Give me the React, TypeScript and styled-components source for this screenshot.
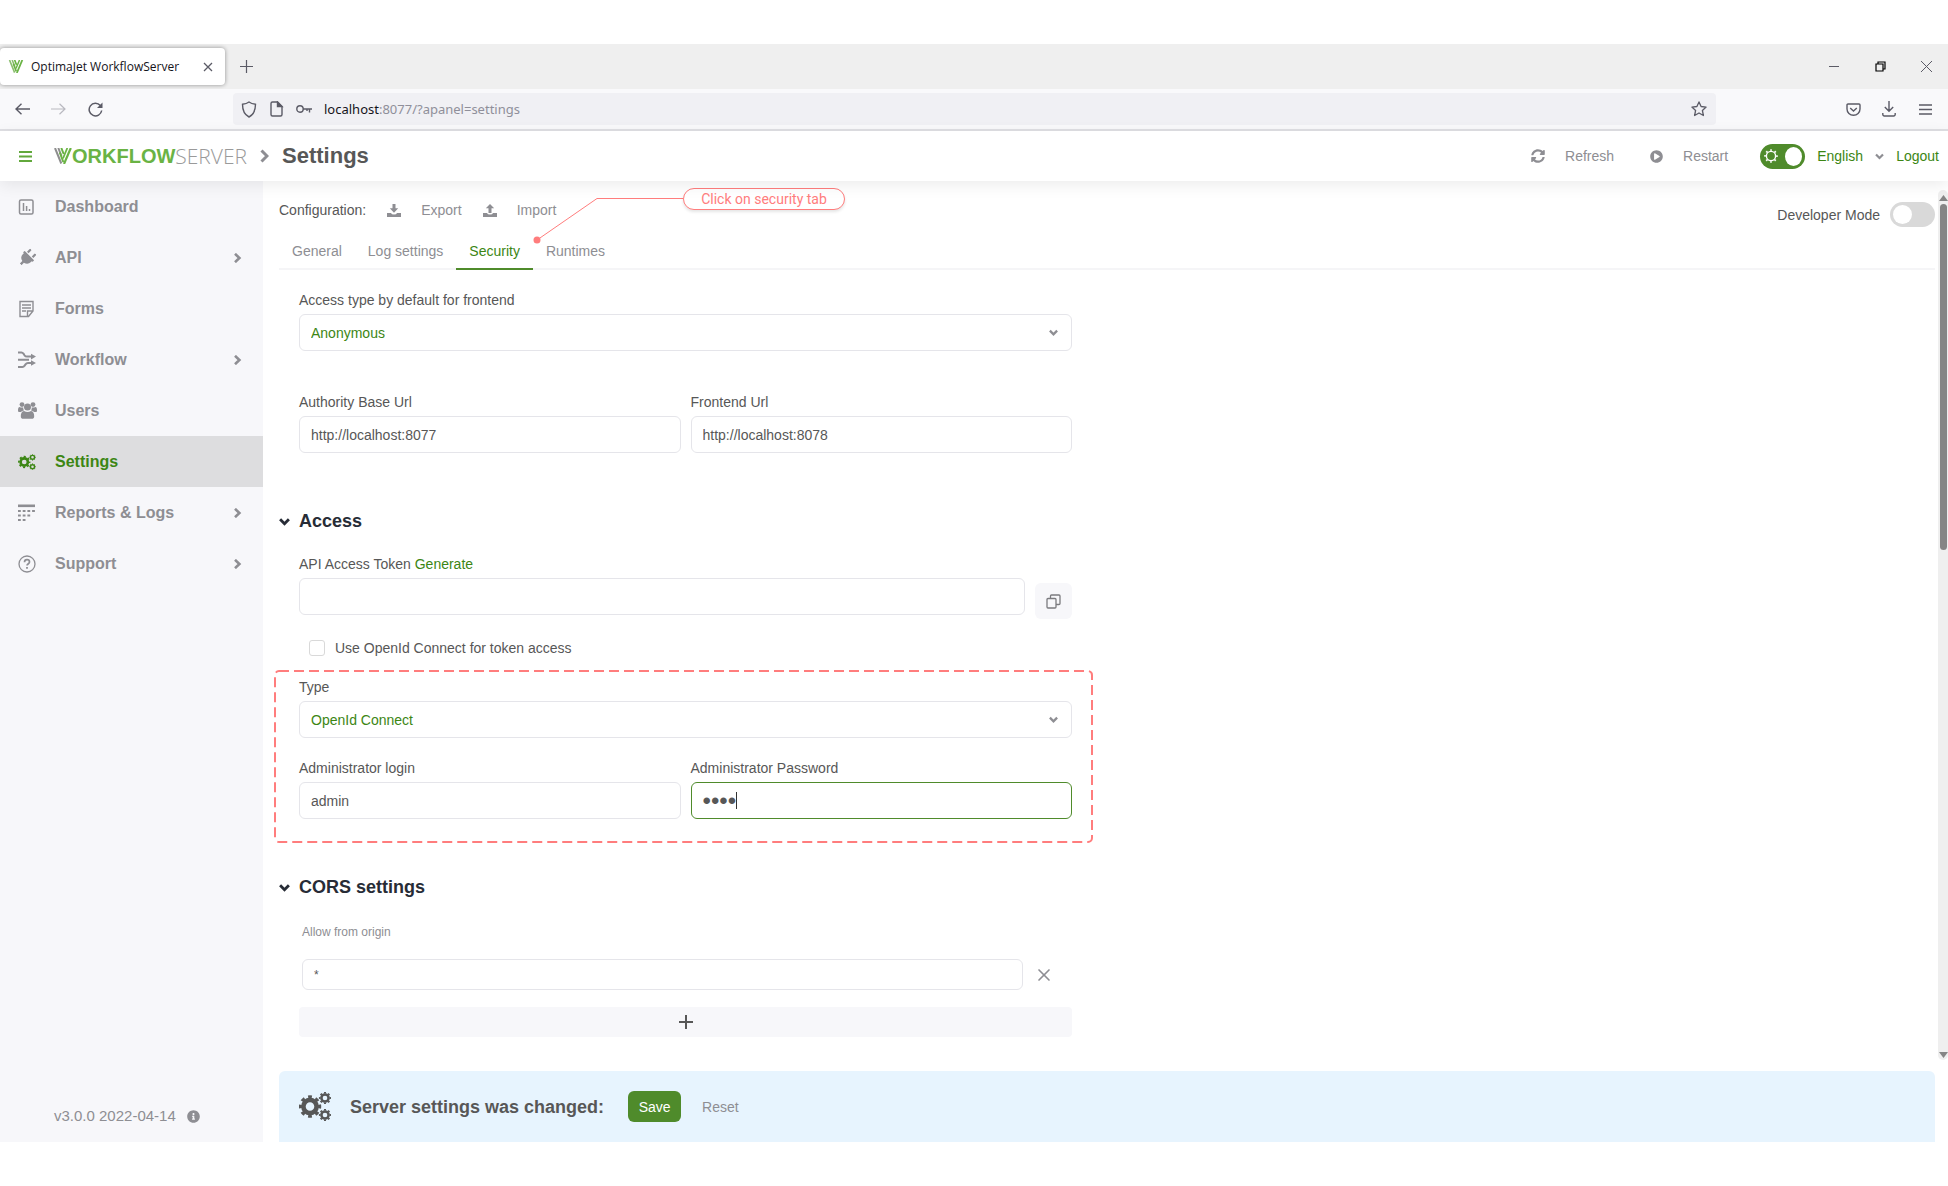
import React, { useState } from "react";
import styled, { createGlobalStyle } from "styled-components";
import { FaPlug, FaInfoCircle, FaPlayCircle, FaSyncAlt } from "react-icons/fa";
import { FiX } from "react-icons/fi";

const green = "#4f8b2b";
const linkGreen = "#3c8614";
const grey = "#8e8e93";
const text = "#575757";
const line = "#e5e5ea";
const pale = "#f7f7fa";
const coral = "#ff7d7d";

const GlobalStyle = createGlobalStyle`
  *, *::before, *::after { box-sizing: border-box; }
  body { margin: 0; background: #fff; color: ${text}; font: 14px/20px "Liberation Sans", Arial, sans-serif; }
  button, input, select { font: inherit; color: inherit; }
  button { background: none; border: 0; padding: 0; display: inline-flex; align-items: center; justify-content: center; }
  a { text-decoration: none; }
  svg { display: block; flex: none; }
`;

const Page = styled.div`
  min-height: 100vh;
  padding: 44px 0;
  display: flex;
  flex-direction: column;
`;

/* browser chrome */
const TabStrip = styled.div`
  display: flex;
  align-items: center;
  justify-content: space-between;
  height: 45px;
  background: #efefef;
`;
const Row = styled.div<{ $gap?: number }>`
  display: flex;
  align-items: center;
  gap: ${(p) => p.$gap ?? 0}px;
`;
const BrowserTab = styled.div`
  display: flex;
  align-items: center;
  width: 225px;
  height: 37px;
  padding: 0 10px 0 8px;
  gap: 7px;
  background: #fff;
  border-radius: 4px;
  box-shadow: 0 0 4px rgba(0, 0, 0, 0.4);
  font: 12px/20px "Open Sans", sans-serif;
  color: #15141a;
`;
const TabTitle = styled.span`
  flex: 1;
  white-space: nowrap;
`;
const ChromeButton = styled.button<{ $w?: number; $c?: string }>`
  width: ${(p) => p.$w ?? 36}px;
  height: 32px;
  color: ${(p) => p.$c ?? "#5b5b66"};
`;
const NavBar = styled.div`
  display: flex;
  align-items: center;
  height: 42px;
  padding: 0 5px 0 4px;
  background: #f9f9fb;
  border-bottom: 2px solid #dfdfe3;
`;
const NavButtons = styled(Row)`
  width: 229px;
`;
const UrlBar = styled.div`
  display: flex;
  align-items: center;
  flex: 1;
  height: 32px;
  padding: 0 6px 0 8px;
  gap: 12px;
  margin-right: 119px;
  background: #f0f0f4;
  border-radius: 4px;
  color: #5b5b66;
`;
const Url = styled.span`
  flex: 1;
  font: 13px/20px "Noto Sans", sans-serif;
  color: #8f8f9a;
  b { font-weight: 400; color: #15141a; }
`;

/* application header */
const Header = styled.header`
  position: relative;
  z-index: 1;
  display: flex;
  align-items: center;
  justify-content: space-between;
  height: 50px;
  padding: 0 9px 0 19px;
  background: #fff;
  box-shadow: 0 4px 16px rgba(0, 0, 0, 0.08);
`;
const MenuButton = styled.button`
  color: #62a83c;
  margin-right: 22px;
`;
const Logo = styled.a`
  display: flex;
  align-items: center;
  font: 700 20px/24px "Liberation Sans", Arial, sans-serif;
  color: #6ab344;
`;
const LogoLight = styled.span`
  font: 300 21px/24px "Open Sans", sans-serif;
  color: #9a9a9a;
`;
const Title = styled.h1`
  margin: 0;
  font-size: 22px;
  line-height: 28px;
`;
const TextButton = styled.button<{ $gap?: number }>`
  gap: ${(p) => p.$gap ?? 20}px;
  color: ${grey};
`;
const HeaderActions = styled(Row)`
  gap: 12px;
`;
const ActionGroup = styled(Row)`
  gap: 36px;
  margin-right: 20px;
`;
const Toggle = styled.label<{ $on?: boolean }>`
  position: relative;
  display: flex;
  align-items: center;
  justify-content: ${(p) => (p.$on ? "flex-end" : "flex-start")};
  width: 45px;
  height: 25px;
  padding: 0 3px;
  border-radius: 13px;
  background: ${(p) => (p.$on ? green : "#d9d9d9")};
  color: #fff;
  input { position: absolute; inset: 0; opacity: 0; margin: 0; width: 100%; height: 100%; }
`;
const Knob = styled.span`
  width: 19px;
  height: 19px;
  border-radius: 50%;
  background: #fff;
`;
const LangSelect = styled.select`
  appearance: none;
  width: 50px;
  padding: 0;
  border: 0;
  background: none;
  color: ${linkGreen};
`;
const LogoutLink = styled.a`
  color: ${linkGreen};
`;

/* sidebar */
const Body = styled.div`
  flex: 1;
  display: grid;
  grid-template-columns: 263px minmax(0, 1fr) 13px;
`;
const Sidebar = styled.nav`
  display: flex;
  flex-direction: column;
  justify-content: space-between;
  background: ${pale};
`;
const Menu = styled.ul`
  margin: 0;
  padding: 0;
  list-style: none;
`;
const MenuItem = styled.a<{ $active?: boolean }>`
  display: grid;
  grid-template-columns: 18px 1fr 8px;
  align-items: center;
  column-gap: 19px;
  height: 51px;
  padding: 0 22px 0 18px;
  font-size: 16px;
  font-weight: 700;
  color: ${(p) => (p.$active ? linkGreen : grey)};
  background: ${(p) => (p.$active ? "#dddddf" : "transparent")};
`;
const Version = styled.div`
  display: flex;
  align-items: center;
  gap: 11px;
  padding: 0 54px 16px;
  font-size: 15px;
  white-space: nowrap;
  color: ${grey};
`;

/* settings page */
const Main = styled.main`
  display: flex;
  flex-direction: column;
  justify-content: space-between;
  padding-left: 16px;
`;
const TopRow = styled.div`
  display: flex;
  justify-content: space-between;
  align-items: flex-start;
  height: 50px;
  padding-top: 19px;
`;
const Config = styled(Row)`
  gap: 21px;
`;
const DevMode = styled(Row)`
  gap: 10px;
  padding-top: 2px;
`;
const Tabs = styled.div`
  position: relative;
  display: flex;
  height: 39px;
  border-bottom: 2px solid #f5f5f7;
`;
const Tab = styled.button<{ $active?: boolean }>`
  height: 39px;
  padding: 3px 13px 0;
  margin-bottom: -2px;
  color: ${(p) => (p.$active ? linkGreen : grey)};
  border-bottom: 2px solid ${(p) => (p.$active ? green : "transparent")};
`;
const Callout = styled.div`
  position: absolute;
  left: 254px;
  top: -43px;
  display: flex;
  align-items: flex-start;
  color: ${coral};
`;
const Pill = styled.span`
  width: 162px;
  height: 22px;
  border: 1px solid ${coral};
  border-radius: 11px;
  font: 14px/20px Roboto, sans-serif;
  text-align: center;
  background: #fff;
  box-shadow: 0 2px 3px rgba(0, 0, 0, 0.1);
`;
const Form = styled.form`
  width: 100%;
  max-width: 793px;
  padding: 20px 0 0 20px;
`;
const Columns = styled.div`
  display: grid;
  grid-template-columns: 1fr 1fr;
  column-gap: 10px;
`;
const FieldBox = styled.div<{ $after?: number }>`
  display: flex;
  flex-direction: column;
  gap: 4px;
  margin-bottom: ${(p) => p.$after ?? 0}px;
`;
const Input = styled.input<{ $short?: boolean }>`
  width: 100%;
  height: ${(p) => (p.$short ? 31 : 37)}px;
  padding: 0 11px;
  border: 1px solid ${line};
  border-radius: 6px;
  background: #fff;
  color: ${text};
  font-size: ${(p) => (p.$short ? 12 : 14)}px;
  outline: none;
`;
const PasswordInput = styled(Input)`
  border-color: ${green};
  font-size: 24px;
  caret-color: transparent;
`;
const Overlay = styled.div`
  display: grid;
  align-items: center;
  > * { grid-area: 1 / 1; }
`;
const Caret = styled.span`
  width: 1px;
  height: 17px;
  margin-left: 45px;
  background: #333;
`;
const SelectWrap = styled(Overlay)`
  > svg { justify-self: end; margin-right: 14px; color: ${grey}; pointer-events: none; }
`;
const Select = styled.select`
  appearance: none;
  width: 100%;
  height: 37px;
  padding: 0 11px;
  border: 1px solid ${line};
  border-radius: 6px;
  background: #fff;
  color: ${linkGreen};
`;
const SectionTitle = styled.h2<{ $after: number }>`
  display: flex;
  align-items: center;
  gap: 9px;
  margin: 0 0 ${(p) => p.$after}px -20px;
  font-size: 18px;
  line-height: 24px;
  color: #272c36;
`;
const TokenRow = styled.div`
  display: grid;
  grid-template-columns: 1fr 37px;
  column-gap: 10px;
`;
const CopyButton = styled.button`
  height: 36px;
  margin-top: 5px;
  border-radius: 6px;
  background: ${pale};
  color: #7b7b7f;
`;
const Generate = styled.a`
  color: ${linkGreen};
`;
const CheckRow = styled.label`
  display: flex;
  align-items: center;
  gap: 10px;
  margin: 19px 0 13px 10px;
`;
const Checkbox = styled.input`
  appearance: none;
  width: 16px;
  height: 16px;
  margin: 0;
  border: 1px solid #d9d9d9;
  border-radius: 3px;
`;
const Highlight = styled.div`
  position: relative;
  margin: 0 -20px 33px -24px;
  padding: 6px 20px 23px 24px;
  > svg { position: absolute; inset: 0; width: 100%; height: 100%; overflow: visible; pointer-events: none; }
`;
const SmallLabel = styled.label`
  display: block;
  margin: 0 0 17px 3px;
  font-size: 12px;
  color: ${grey};
`;
const OriginRow = styled.div`
  display: grid;
  grid-template-columns: 1fr 42px;
  margin: 0 7px 17px 3px;
  color: ${grey};
`;
const AddButton = styled.button`
  width: 100%;
  height: 30px;
  border-radius: 4px;
  background: ${pale};
  color: ${text};
`;
const SaveBar = styled.div`
  display: flex;
  align-items: center;
  height: 71px;
  padding: 0 20px;
  border-radius: 6px 6px 0 0;
  background: #e7f4fe;
`;
const SaveText = styled.strong`
  margin: 0 24px 0 19px;
  font-size: 18px;
`;
const SaveButton = styled.button`
  width: 53px;
  height: 31px;
  margin-right: 21px;
  border-radius: 6px;
  background: ${green};
  color: #fff;
`;
const ScrollTrack = styled.div`
  align-self: stretch;
  display: flex;
  flex-direction: column;
  align-items: center;
  margin: 9px 0 82px 3px;
  padding: 5px 0 2px 1px;
  border-radius: 5px;
  background: #efefef;
  color: #858585;
`;
const ScrollArea = styled.div`
  flex: 1;
  width: 7px;
  margin: 3px 0;
`;
const Thumb = styled.div`
  height: 41%;
  border-radius: 4px;
  background: #858585;
`;

const Stroke = ({ w = 16, h = w, vb, sw = 1, children }: { w?: number; h?: number; vb?: string; sw?: number; children: React.ReactNode }) => (
  <svg width={w} height={h} viewBox={vb ?? `0 0 ${w} ${h}`} fill="none" stroke="currentColor" strokeWidth={sw} aria-hidden="true">
    {children}
  </svg>
);
const Chevron = ({ dir = "right", size = 8 }: { dir?: "right" | "down"; size?: number }) => (
  <Stroke w={size} h={size} vb="0 0 10 10" sw={2.6}>
    <path d={dir === "right" ? "M2 .8L6.400 5L2 9.200" : "M1 3L5 7L9 3"} />
  </Stroke>
);
const Mark = ({ w, h, left }: { w: number; h: number; left: string }) => (
  <svg width={w} height={h} viewBox="0 0 18 16" fill="none" strokeWidth="2" aria-hidden="true">
    <path d="M1 0L7.300 15.500M4.300 0L7.500 8" stroke={left} />
    <path d="M7.300 0L9.700 6M5.800 4.500L9.300 14" stroke="#6ab344" />
    <path d="M16.800 0L10 16" stroke="#6ab344" strokeWidth="2.200" />
    <path d="M13.300 0L9 10.500" stroke="#6ab344" strokeWidth="1.800" />
  </svg>
);

const Gear = ({ x, y, r }: { x: number; y: number; r: number }) => (
  <g>
    <circle cx={x} cy={y} r={r * 0.6} strokeWidth={r * 0.42} />
    <circle cx={x} cy={y} r={r * 0.88} strokeWidth={r * 0.28} pathLength={80} strokeDasharray="5 5" strokeDashoffset="2.500" />
  </g>
);
const GearsIcon = ({ w, h }: { w: number; h: number }) => (
  <Stroke w={w} h={h} vb="0 0 32 29">
    <Gear x={11} y={14.5} r={11} />
    <Gear x={26} y={6} r={6} />
    <Gear x={26} y={23} r={6} />
  </Stroke>
);
const DashboardIcon = () => (
  <Stroke w={16} sw={1.5}>
    <rect x="1.500" y="1" width="13.500" height="14" rx="1.500" />
    <path d="M5.500 4v8M8.600 7v5M11.500 10v2" />
  </Stroke>
);
const FormIcon = () => (
  <Stroke w={17} h={18} sw={1.4}>
    <path d="M2 1.500h13v9.500l-4.500 5.500H2zM9.500 16.500v-5.500h5.500M4 5h9M4 8h9M4 11h4" />
  </Stroke>
);
const FlowIcon = () => (
  <Stroke w={18} sw={2}>
    <path d="M0 1.500h3.500q1 0 2 1.200l1 1.600q1 1.300 2.500 1.300H15M0 8.800h11M0 16h4.500q1.200 0 2-1.200l1-1.400q1-1.400 2.500-1.400H15" />
    <path d="M13 2.800l5 2.800-5 2.800zM13 9.200l5 2.800-5 2.800z" fill="currentColor" stroke="none" />
  </Stroke>
);
const UsersIcon = () => (
  <svg width="19" height="17" viewBox="0 0 19 17" fill="currentColor" aria-hidden="true">
    <circle cx="4" cy="2.600" r="2.400" />
    <circle cx="15" cy="2.600" r="2.400" />
    <circle cx="9.500" cy="5" r="3.500" />
    <path d="M5.200 5.200A5 5 0 0 0 6 8.500c-1.600.2-2.500 1-3 1.500H1.500C.5 10 0 9.500 0 8.500 0 6.500.5 5 1.500 5q2.500 1 3.700.2zM13.800 5.200a5 5 0 0 1-.8 3.300c1.600.2 2.500 1 3 1.500h1.500c1 0 1.500-.5 1.500-1.500C19 6.500 18.500 5 17.500 5q-2.500 1-3.700.2z" />
    <path d="M6 9q3.500 2 7 0c2.300.3 3.200 2.600 3.200 5.200 0 1.800-1 2.600-2.500 2.600H5.300c-1.500 0-2.500-.8-2.500-2.600C2.800 11.600 3.700 9.300 6 9z" />
  </svg>
);
const LogsIcon = () => (
  <Stroke w={18} sw={2}>
    <path d="M0 1.800h17" strokeWidth="2.600" />
    <path d="M0 7h17M0 11.500h12.500M0 16h8" strokeDasharray="2.800 1.900" />
  </Stroke>
);
const SupportIcon = () => (
  <Stroke w={18} sw={1.3}>
    <circle cx="9" cy="9" r="8" />
    <path d="M6.500 7.200c0-3.400 5-3.200 5-.2 0 1.700-2.500 1.700-2.500 3.600" strokeWidth="1.700" />
    <path d="M9 12v1.800" strokeWidth="1.800" />
  </Stroke>
);
const TrayIcon = ({ up }: { up?: boolean }) => (
  <svg width="14" height="13" viewBox="0 0 14 13" fill="currentColor" aria-hidden="true">
    <path d={up ? "M7 0l4.200 4.300H8.500V9h-3V4.300H2.800z" : "M5.500 0h3v4.200h2.700L7 8.700 2.800 4.200h2.700z"} />
    <path d="M0 9h4q.5 1.500 3 1.500T10 9h4v4H0z" />
  </svg>
);

const items: { label: string; icon: React.ReactNode; sub?: boolean; active?: boolean }[] = [
  { label: "Dashboard", icon: <DashboardIcon /> },
  { label: "API", icon: <FaPlug size={18} transform="rotate(45)" />, sub: true },
  { label: "Forms", icon: <FormIcon /> },
  { label: "Workflow", icon: <FlowIcon />, sub: true },
  { label: "Users", icon: <UsersIcon /> },
  { label: "Settings", icon: <GearsIcon w={18} h={16} />, active: true },
  { label: "Reports & Logs", icon: <LogsIcon />, sub: true },
  { label: "Support", icon: <SupportIcon />, sub: true },
];

const Field = ({ id, label, value, after }: { id: string; label: string; value: string; after?: number }) => (
  <FieldBox $after={after}>
    <label htmlFor={id}>{label}</label>
    <Input id={id} defaultValue={value} />
  </FieldBox>
);
const PasswordField = ({ id, label }: { id: string; label: string }) => {
  const [value, setValue] = useState("pass");
  return (
    <FieldBox>
      <label htmlFor={id}>{label}</label>
      <Overlay>
        <PasswordInput id={id} type="password" value={value} onChange={(e) => setValue(e.target.value)} />
        {value.length === 4 && <Caret />}
      </Overlay>
    </FieldBox>
  );
};
const SelectField = ({ id, label, value, after }: { id: string; label: string; value: string; after: number }) => (
  <FieldBox $after={after}>
    <label htmlFor={id}>{label}</label>
    <SelectWrap>
      <Select id={id} defaultValue={value}>
        <option>{value}</option>
      </Select>
      <Chevron dir="down" size={9} />
    </SelectWrap>
  </FieldBox>
);

const Browser = () => (
  <>
    <TabStrip>
      <Row $gap={3}>
        <BrowserTab>
          <Mark w={16} h={13} left="#8cbf70" />
          <TabTitle>OptimaJet WorkflowServer</TabTitle>
          <ChromeButton $w={14} aria-label="Close tab"><Stroke w={10} sw={1.3}><path d="M1 1l8 8M9 1l-8 8" /></Stroke></ChromeButton>
        </BrowserTab>
        <ChromeButton aria-label="New tab"><Stroke w={13} sw={1.2}><path d="M6.500 0v13M0 6.500h13" /></Stroke></ChromeButton>
      </Row>
      <Row>
        <ChromeButton $w={47} aria-label="Minimize"><Stroke w={10}><path d="M0 4.500h10" /></Stroke></ChromeButton>
        <ChromeButton $w={47} $c="#000" aria-label="Restore"><Stroke w={11} sw={1.2}><path d="M1 3h7v7H1zM3 3V1h7v7H8" /></Stroke></ChromeButton>
        <ChromeButton $w={44} aria-label="Close"><Stroke w={11}><path d="M0 0l11 11M11 0L0 11" /></Stroke></ChromeButton>
      </Row>
    </TabStrip>
    <NavBar>
      <NavButtons>
        <ChromeButton aria-label="Back"><Stroke w={15} h={12} sw={1.4}><path d="M15 6H1M6.500.7L1 6l5.500 5.300" /></Stroke></ChromeButton>
        <ChromeButton $c="#b9b9c0" aria-label="Forward"><Stroke w={15} h={12} sw={1.2}><path d="M0 6h14M8.500.7L14 6l-5.500 5.300" /></Stroke></ChromeButton>
        <ChromeButton $w={38} aria-label="Reload"><Stroke w={15} sw={1.5}><path d="M13.700 8.500A6.300 6.300 0 1 1 12.300 3.500" /><path d="M14.500.5v5.500H9z" fill="currentColor" stroke="none" /></Stroke></ChromeButton>
      </NavButtons>
      <UrlBar>
        <Stroke w={16} h={17} sw={1.4}><path d="M8 1c2 1.500 4 2 6.500 2.300C14.500 9 13 13.500 8 16 3 13.500 1.500 9 1.500 3.300 4 3 6 2.500 8 1z" /></Stroke>
        <Stroke w={15} h={16} sw={1.4}><path d="M3.500 1h5l4.500 4.500v8a1.500 1.500 0 0 1-1.500 1.500h-8A1.500 1.500 0 0 1 2 13.500v-11A1.500 1.500 0 0 1 3.500 1z" /><path d="M8.500 1L13 5.500H8.500z" fill="currentColor" /></Stroke>
        <Stroke w={16} h={10} sw={1.4}><circle cx="4" cy="5" r="3.200" /><path d="M7 5h9M13.500 5v3.500M11 5v2" /></Stroke>
        <Url><b>localhost</b>:8077/?apanel=settings</Url>
        <ChromeButton $w={22} aria-label="Bookmark this page"><Stroke w={16} sw={1.3}><path d="M8 .9l2.100 4.600 5 .6-3.700 3.400 1 5L8 12l-4.400 2.500 1-5L.9 6.100l5-.6z" strokeLinejoin="round" /></Stroke></ChromeButton>
      </UrlBar>
      <ChromeButton aria-label="Save to Pocket"><Stroke w={15} h={13} sw={1.4}><path d="M2 1h11a1 1 0 0 1 1 1v4a6.500 6.300 0 0 1-13 0V2a1 1 0 0 1 1-1zM4.200 5l3.300 3 3.300-3" /></Stroke></ChromeButton>
      <ChromeButton aria-label="Downloads"><Stroke w={14} h={16} sw={1.4}><path d="M7 0v10M2.800 6L7 10.200 11.200 6M.8 12v1.500a1.500 1.500 0 0 0 1.500 1.500h9.400a1.500 1.500 0 0 0 1.500-1.500V12" /></Stroke></ChromeButton>
      <ChromeButton aria-label="Application menu"><Stroke w={13} h={11} sw={1.3}><path d="M0 1h13M0 5.500h13M0 10h13" /></Stroke></ChromeButton>
    </NavBar>
  </>
);

export default function App() {
  return (
    <Page>
      <GlobalStyle />
      <Browser />
      <Header>
        <Row>
          <MenuButton aria-label="Toggle menu"><Stroke w={13} h={11} sw={2}><path d="M0 1h13M0 5.500h13M0 10h13" /></Stroke></MenuButton>
          <Row $gap={13}>
            <Logo href="#" aria-label="Workflow Server"><Mark w={18} h={16} left="#8e8e8e" />ORKFLOW<LogoLight>SERVER</LogoLight></Logo>
            <Row $gap={13}>
              <Stroke w={9} h={14} sw={3}><path d="M1.500 1.500L7 7l-5.500 5.500" stroke={grey} /></Stroke>
              <Title>Settings</Title>
            </Row>
          </Row>
        </Row>
        <HeaderActions>
          <ActionGroup>
            <TextButton><FaSyncAlt size={14} />Refresh</TextButton>
            <TextButton><FaPlayCircle size={13} />Restart</TextButton>
          </ActionGroup>
          <Toggle $on>
            <input type="checkbox" defaultChecked aria-label="Light theme" />
            <Stroke w={22} h={14} vb="-1 0 22 14" sw={1.4}>
              <circle cx="7" cy="7" r="4.600" />
              <circle cx="7" cy="7" r="5.900" strokeWidth="1.800" pathLength={80} strokeDasharray="3.500 6.500" strokeDashoffset="1.700" />
            </Stroke>
            <Knob />
          </Toggle>
          <Row $gap={8}>
            <LangSelect aria-label="Language"><option>English</option></LangSelect>
            <Stroke w={9} h={9} sw={2.2}><path d="M1 2.500l3.500 3.500L8 2.500" stroke={grey} /></Stroke>
          </Row>
          <LogoutLink href="#">Logout</LogoutLink>
        </HeaderActions>
      </Header>
      <Body>
        <Sidebar>
          <Menu>
            {items.map((i) => (
              <li key={i.label}>
                <MenuItem href="#" $active={i.active}>
                  {i.icon}
                  <span>{i.label}</span>
                  {i.sub && <Chevron size={10} />}
                </MenuItem>
              </li>
            ))}
          </Menu>
          <Version>v3.0.0 2022-04-14 <FaInfoCircle size={13} /></Version>
        </Sidebar>
        <Main>
          <div>
            <TopRow>
              <Config>
                Configuration:
                <TextButton><TrayIcon />Export</TextButton>
                <TextButton><TrayIcon up />Import</TextButton>
              </Config>
              <DevMode>
                <label htmlFor="dev">Developer Mode</label>
                <Toggle><input id="dev" type="checkbox" /><Knob /></Toggle>
              </DevMode>
            </TopRow>
            <Tabs role="tablist">
              <Tab role="tab">General</Tab>
              <Tab role="tab">Log settings</Tab>
              <Tab role="tab" $active aria-selected>Security</Tab>
              <Tab role="tab">Runtimes</Tab>
              <Callout>
                <Stroke w={150} h={58}>
                  <path d="M150 10.500H64L4 52" />
                  <circle cx="4" cy="52" r="3.500" fill="currentColor" stroke="none" />
                </Stroke>
                <Pill>Click on security tab</Pill>
              </Callout>
            </Tabs>
            <Form>
              <SelectField id="access" label="Access type by default for frontend" value="Anonymous" after={41} />
              <Columns>
                <Field id="authority" label="Authority Base Url" value="http://localhost:8077" after={56} />
                <Field id="frontend" label="Frontend Url" value="http://localhost:8078" />
              </Columns>
              <SectionTitle $after={21}><Chevron dir="down" size={11} />Access</SectionTitle>
              <FieldBox>
                <span><label htmlFor="token">API Access Token</label> <Generate href="#">Generate</Generate></span>
                <TokenRow>
                  <Input id="token" />
                  <CopyButton type="button" aria-label="Copy token">
                    <Stroke w={15} sw={1.3}><path d="M2 4.500h7a1 1 0 0 1 1 1v7.500a1 1 0 0 1-1 1H2a1 1 0 0 1-1-1V5.500a1 1 0 0 1 1-1zM4.500 4.500V2a1 1 0 0 1 1-1H13a1 1 0 0 1 1 1v7.500a1 1 0 0 1-1 1h-3" /></Stroke>
                  </CopyButton>
                </TokenRow>
              </FieldBox>
              <CheckRow><Checkbox type="checkbox" />Use OpenId Connect for token access</CheckRow>
              <Highlight>
                <SelectField id="type" label="Type" value="OpenId Connect" after={20} />
                <Columns>
                  <Field id="login" label="Administrator login" value="admin" />
                  <PasswordField id="password" label="Administrator Password" />
                </Columns>
                <svg aria-hidden="true">
                  <rect width="100%" height="100%" rx="4" fill="none" stroke={coral} strokeWidth="2" strokeDasharray="10 5" />
                </svg>
              </Highlight>
              <SectionTitle $after={23}><Chevron dir="down" size={11} />CORS settings</SectionTitle>
              <SmallLabel htmlFor="origin">Allow from origin</SmallLabel>
              <OriginRow>
                <Input id="origin" $short defaultValue="*" />
                <button type="button" aria-label="Remove origin"><FiX size={20} /></button>
              </OriginRow>
              <AddButton type="button" aria-label="Add origin"><Stroke w={14} sw={2}><path d="M7 0v14M0 7h14" /></Stroke></AddButton>
            </Form>
          </div>
          <SaveBar>
            <GearsIcon w={32} h={29} />
            <SaveText>Server settings was changed:</SaveText>
            <SaveButton>Save</SaveButton>
            <TextButton>Reset</TextButton>
          </SaveBar>
        </Main>
        <ScrollTrack aria-hidden="true">
          <svg width="9" height="6"><path d="M0 6L4.500 0L9 6z" fill="currentColor" /></svg>
          <ScrollArea><Thumb /></ScrollArea>
          <svg width="9" height="6"><path d="M0 0L4.500 6L9 0z" fill="currentColor" /></svg>
        </ScrollTrack>
      </Body>
    </Page>
  );
}
